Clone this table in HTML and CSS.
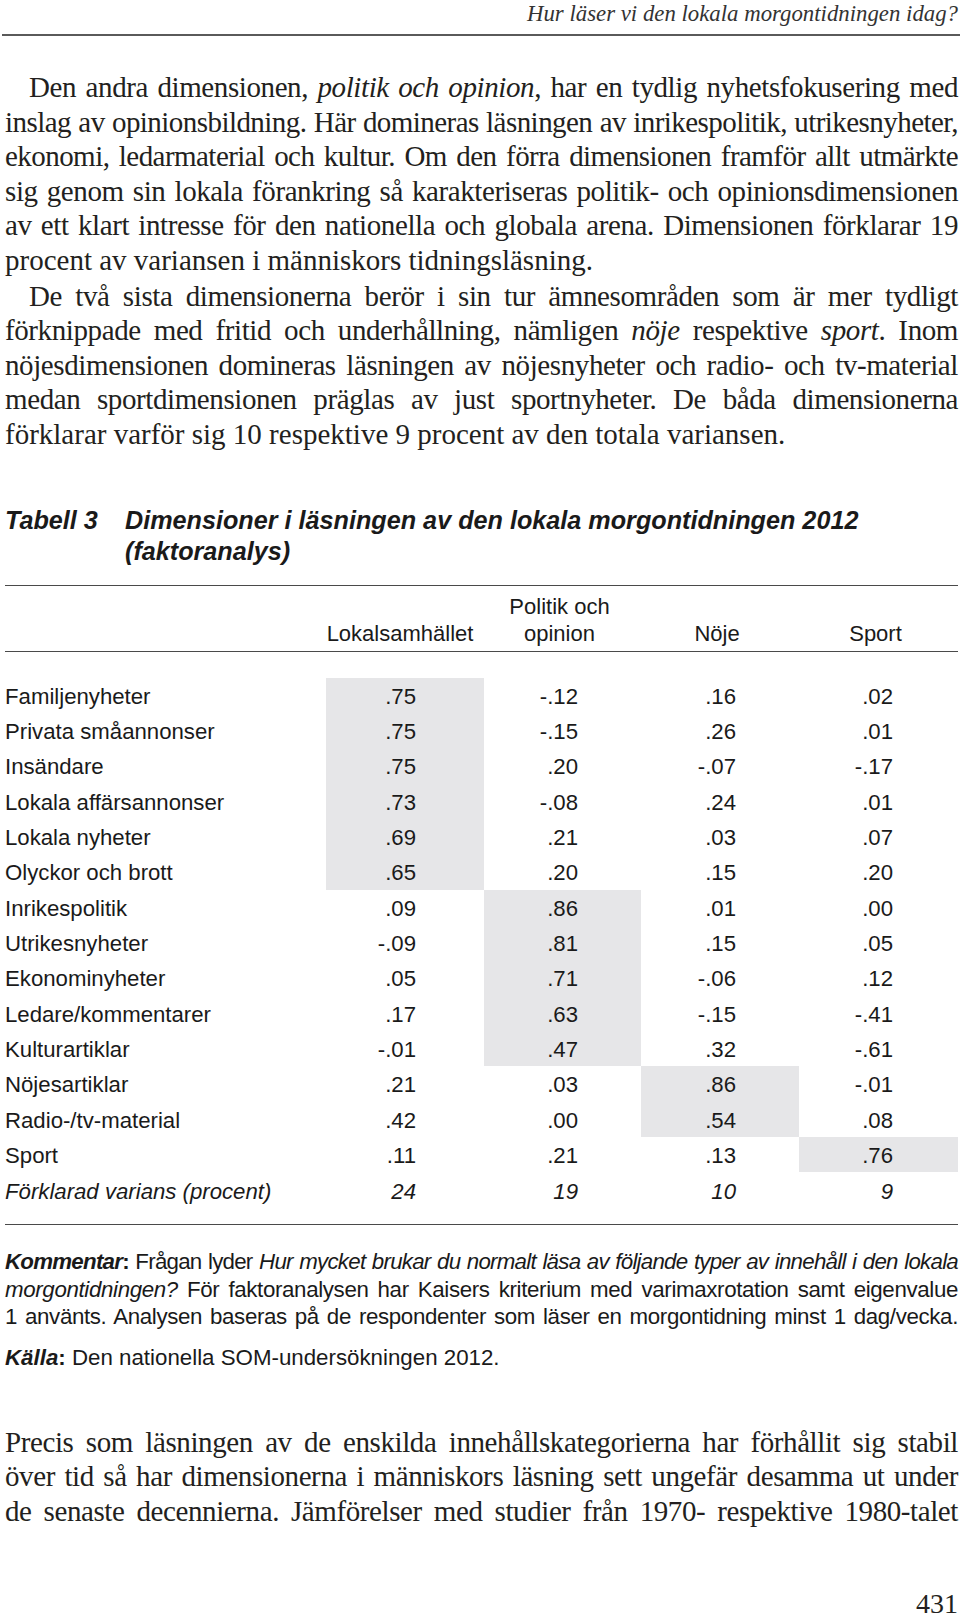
FILE: index.html
```html
<!DOCTYPE html>
<html lang="sv">
<head>
<meta charset="utf-8">
<title>Hur läser vi den lokala morgontidningen idag?</title>
<link rel="stylesheet" href="styles.css">
</head>
<body>
<div class="page">
  <header class="running-head">Hur läser vi den lokala morgontidningen idag?</header>

  <p class="para first">
    <span class="ln in">Den andra dimensionen, <i>politik och opinion</i>, har en tydlig nyhetsfokusering med</span>
    <span class="ln tight">inslag av opinionsbildning. Här domineras läsningen av inrikespolitik, utrikesnyheter,</span>
    <span class="ln tight">ekonomi, ledarmaterial och kultur. Om den förra dimensionen framför allt utmärkte</span>
    <span class="ln">sig genom sin lokala förankring så karakteriseras politik- och opinionsdimensionen</span>
    <span class="ln">av ett klart intresse för den nationella och globala arena. Dimensionen förklarar 19</span>
    <span class="ln last">procent av variansen i människors tidningsläsning.</span>
  </p>
  <p class="para second">
    <span class="ln in">De två sista dimensionerna berör i sin tur ämnesområden som är mer tydligt</span>
    <span class="ln">förknippade med fritid och underhållning, nämligen <i>nöje</i> respektive <i>sport</i>. Inom</span>
    <span class="ln">nöjesdimensionen domineras läsningen av nöjesnyheter och radio- och tv-material</span>
    <span class="ln">medan sportdimensionen präglas av just sportnyheter. De båda dimensionerna</span>
    <span class="ln last">förklarar varför sig 10 respektive 9 procent av den totala variansen.</span>
  </p>

  <section class="table-block">
    <div class="caption">
      <span class="cap-label">Tabell 3</span>
      <span class="cap-title">Dimensioner i läsningen av den lokala morgontidningen 2012<br>(faktoranalys)</span>
    </div>

    <div class="tbl-head">
      <div></div>
      <div class="th first-th">Lokalsamhället</div>
      <div class="th">Politik och<br>opinion</div>
      <div class="th">Nöje</div>
      <div class="th">Sport</div>
    </div>

    <div class="tbl-body">
      <div class="lbl">Familjenyheter</div><div class="num c1 hl">.75</div><div class="num c2">-.12</div><div class="num c3">.16</div><div class="num c4">.02</div>
      <div class="lbl">Privata småannonser</div><div class="num c1 hl">.75</div><div class="num c2">-.15</div><div class="num c3">.26</div><div class="num c4">.01</div>
      <div class="lbl">Insändare</div><div class="num c1 hl">.75</div><div class="num c2">.20</div><div class="num c3">-.07</div><div class="num c4">-.17</div>
      <div class="lbl">Lokala affärsannonser</div><div class="num c1 hl">.73</div><div class="num c2">-.08</div><div class="num c3">.24</div><div class="num c4">.01</div>
      <div class="lbl">Lokala nyheter</div><div class="num c1 hl">.69</div><div class="num c2">.21</div><div class="num c3">.03</div><div class="num c4">.07</div>
      <div class="lbl">Olyckor och brott</div><div class="num c1 hl">.65</div><div class="num c2">.20</div><div class="num c3">.15</div><div class="num c4">.20</div>
      <div class="lbl">Inrikespolitik</div><div class="num c1">.09</div><div class="num c2 hl">.86</div><div class="num c3">.01</div><div class="num c4">.00</div>
      <div class="lbl">Utrikesnyheter</div><div class="num c1">-.09</div><div class="num c2 hl">.81</div><div class="num c3">.15</div><div class="num c4">.05</div>
      <div class="lbl">Ekonominyheter</div><div class="num c1">.05</div><div class="num c2 hl">.71</div><div class="num c3">-.06</div><div class="num c4">.12</div>
      <div class="lbl">Ledare/kommentarer</div><div class="num c1">.17</div><div class="num c2 hl">.63</div><div class="num c3">-.15</div><div class="num c4">-.41</div>
      <div class="lbl">Kulturartiklar</div><div class="num c1">-.01</div><div class="num c2 hl">.47</div><div class="num c3">.32</div><div class="num c4">-.61</div>
      <div class="lbl">Nöjesartiklar</div><div class="num c1">.21</div><div class="num c2">.03</div><div class="num c3 hl">.86</div><div class="num c4">-.01</div>
      <div class="lbl">Radio-/tv-material</div><div class="num c1">.42</div><div class="num c2">.00</div><div class="num c3 hl">.54</div><div class="num c4">.08</div>
      <div class="lbl">Sport</div><div class="num c1">.11</div><div class="num c2">.21</div><div class="num c3">.13</div><div class="num c4 hl">.76</div>
      <div class="lbl it">Förklarad varians (procent)</div><div class="num c1 it">24</div><div class="num c2 it">19</div><div class="num c3 it">10</div><div class="num c4 it">9</div>
    </div>

    <div class="note">
      <span class="ln n1"><b><i>Kommentar</i>:</b> Frågan lyder <i>Hur mycket brukar du normalt läsa av följande typer av innehåll i den lokala</i></span>
      <span class="ln"><i>morgontidningen?</i> För faktoranalysen har Kaisers kriterium med varimaxrotation samt eigenvalue</span>
      <span class="ln">1 använts. Analysen baseras på de respondenter som läser en morgontidning minst 1 dag/vecka.</span>
    </div>
    <div class="source"><b><i>Källa</i>:</b> Den nationella SOM-undersökningen 2012.</div>
  </section>

  <p class="para after">
    <span class="ln">Precis som läsningen av de enskilda innehållskategorierna har förhållit sig stabil</span>
    <span class="ln">över tid så har dimensionerna i människors läsning sett ungefär desamma ut under</span>
    <span class="ln">de senaste decennierna. Jämförelser med studier från 1970- respektive 1980-talet</span>
  </p>

  <div class="folio">431</div>
</div>
</body>
</html>
```

FILE: styles.css
```css
html, body {
  margin: 0;
  padding: 0;
  background: #ffffff;
}

.page {
  width: 953px;
  padding: 0 2px 0 5px;
  color: #231f20;
}

.running-head {
  height: 34px;
  line-height: 28px;
  text-align: right;
  font-family: "Liberation Serif", serif;
  font-style: italic;
  font-size: 22.8px;
  color: #333;
  border-bottom: 2px solid #5a5a5a;
  margin-left: -3px;
  margin-right: -2px;
  padding-right: 2px;
}

.para {
  margin: 0;
  font-family: "Liberation Serif", serif;
  font-size: 29px;
  line-height: 34.6px;
  color: #231f20;
}

.para.first {
  margin-top: 34px;
}

.para.second {
  margin-top: 1px;
}

.ln {
  display: block;
  text-align: justify;
  text-align-last: justify;
  letter-spacing: -0.4px;
  word-spacing: -2px;
}

.ln.in {
  text-indent: 24px;
}

.ln.last {
  text-align-last: left;
  letter-spacing: 0;
  word-spacing: 0;
}

.ln.tight {
  letter-spacing: -0.55px;
  word-spacing: -3px;
}

/* Table */
.table-block {
  margin-top: 53px;
  font-family: "Liberation Sans", Arial, sans-serif;
  color: #1a1a1a;
}

.caption {
  display: grid;
  grid-template-columns: 120px 1fr;
  font-size: 25.2px;
  line-height: 31px;
  font-weight: bold;
  font-style: italic;
  color: #1a1a1a;
}

.tbl-head,
.tbl-body {
  display: grid;
  grid-template-columns: 321px 158px 157px 158px 159px;
}

.tbl-head {
  margin-top: 18.5px;
  border-top: 1.5px solid #4a4a4a;
  border-bottom: 1.5px solid #4a4a4a;
  padding: 6.5px 0 4px;
  font-size: 22px;
  line-height: 27px;
  align-items: end;
}

.th {
  text-align: center;
  padding-right: 6px;
}

.th.first-th {
  padding-right: 10px;
}

.tbl-body {
  grid-auto-rows: 35.35px;
  padding: 26px 0 16px;
  border-bottom: 1.5px solid #4a4a4a;
  font-size: 22.2px;
}

.lbl,
.num {
  display: flex;
  align-items: center;
  padding-top: 3px;
}

.num {
  justify-content: flex-end;
}

.c1 { padding-right: 68px; }
.c2 { padding-right: 63px; }
.c3 { padding-right: 63px; }
.c4 { padding-right: 65px; }

.hl {
  background: #e6e6e8;
}

.it {
  font-style: italic;
}

.note {
  margin-top: 23.5px;
  font-size: 22.3px;
  line-height: 27.5px;
}

.note .ln {
  letter-spacing: -0.35px;
  word-spacing: 0;
}

.note .n1 {
  letter-spacing: -0.75px;
}

.source {
  margin-top: 13.5px;
  font-size: 22.3px;
  line-height: 27.5px;
}

.para.after {
  margin-top: 53px;
}

.folio {
  margin-top: 63px;
  text-align: right;
  font-family: "Liberation Serif", serif;
  font-size: 28px;
  line-height: 26px;
  color: #231f20;
}
```
